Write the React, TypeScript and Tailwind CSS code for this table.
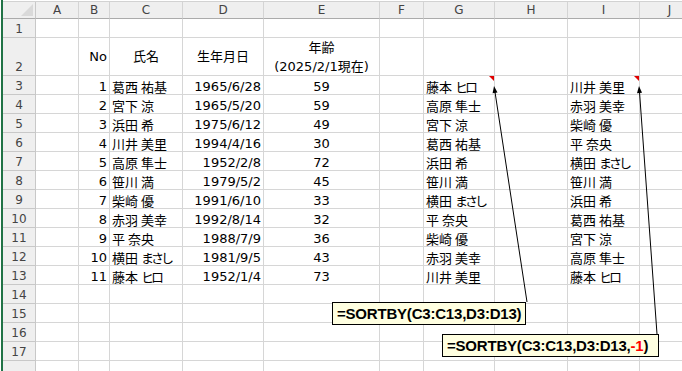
import React from 'react';

type Person = { no: number; name: string; birth: string; age: number };

const people: Person[] = [
  { no: 1, name: '葛西 祐基', birth: '1965/6/28', age: 59 },
  { no: 2, name: '宮下 涼', birth: '1965/5/20', age: 59 },
  { no: 3, name: '浜田 希', birth: '1975/6/12', age: 49 },
  { no: 4, name: '川井 美里', birth: '1994/4/16', age: 30 },
  { no: 5, name: '高原 隼士', birth: '1952/2/8', age: 72 },
  { no: 6, name: '笹川 満', birth: '1979/5/2', age: 45 },
  { no: 7, name: '柴崎 優', birth: '1991/6/10', age: 33 },
  { no: 8, name: '赤羽 美幸', birth: '1992/8/14', age: 32 },
  { no: 9, name: '平 奈央', birth: '1988/7/9', age: 36 },
  { no: 10, name: '横田 まさし', birth: '1981/9/5', age: 43 },
  { no: 11, name: '藤本 ヒロ', birth: '1952/1/4', age: 73 },
];

// SORTBY results
const byBirthAsc = ['藤本 ヒロ', '高原 隼士', '宮下 涼', '葛西 祐基', '浜田 希', '笹川 満', '横田 まさし', '平 奈央', '柴崎 優', '赤羽 美幸', '川井 美里'];
const byBirthDesc = [...byBirthAsc].reverse();

const font = { fontFamily: '"DejaVu Sans", "Noto Sans CJK JP", sans-serif' };
const jp: React.CSSProperties = { fontFamily: '"Noto Sans CJK JP", sans-serif' };

const colLetters = ['A', 'B', 'C', 'D', 'E', 'F', 'G', 'H', 'I', 'J'];
const colW = ['w-[43px]', 'w-[31px]', 'w-[73px]', 'w-[81px]', 'w-[116px]', 'w-[44px]', 'w-[71px]', 'w-[73px]', 'w-[72px]', 'w-[60px]'];

const grid = 'shrink-0 border-r border-b border-[#d6d6d6] overflow-hidden whitespace-nowrap';

const RowHead: React.FC<{ n?: number; tall?: boolean }> = ({ n, tall }) => (
  <div className={`shrink-0 w-[33px] bg-[#efefef] border-r border-b border-[#c8c8c8] text-center text-[12px] text-[#444] ${tall ? 'h-[38px] pt-[22px] leading-[15px]' : 'h-[19px] pt-[3px] leading-[15px]'}`}>
    {n}
  </div>
);

const Marker = () => (
  <div className="absolute top-0 right-0 w-0 h-0 border-t-[5px] border-l-[5px] border-t-[#e00000] border-l-transparent" />
);

// kana in the sheet font is proportional, so squeeze it a bit
const Name: React.FC<{ text: string }> = ({ text }) => (
  <span style={jp}>
    {text.split(/([ぁ-んァ-ン]+)/).map((part, i) =>
      /[ぁ-んァ-ン]/.test(part) ? (
        <span key={i} className="tracking-[-3px]">{part}</span>
      ) : (
        <React.Fragment key={i}>{part}</React.Fragment>
      )
    )}
  </span>
);

const DataRow: React.FC<{ n?: number; cells: (React.ReactNode | null)[]; mark?: boolean }> = ({ n, cells, mark }) => (
  <div className="flex h-[19px]">
    <RowHead n={n} />
    {colW.map((w, i) => {
      const align =
        i === 1 || i === 3 ? 'text-right pr-[2px]' : i === 4 ? 'text-center' : 'text-left pl-[2px]';
      return (
        <div key={i} className={`${grid} ${w} h-[19px] pt-[3px] leading-[15px] text-[13px] text-black relative ${align}`}>
          {cells[i]}
          {mark && (i === 6 || i === 8) && <Marker />}
        </div>
      );
    })}
  </div>
);

export default function App() {
  const empty = Array(10).fill(null);

  return (
    <div className="relative w-[682px] h-[371px] overflow-hidden bg-white flex" style={font}>
      <div className="w-[1px] shrink-0 bg-white" />
      <div className="w-[2px] shrink-0 bg-[#217346]" />

      <div className="flex flex-col">
        {/* strip above headers */}
        <div className="h-[10px] bg-white">
          <div className="mt-[1px] h-[1px] bg-[#d2d2d2]" />
        </div>

        {/* column headers */}
        <div className="flex h-[17px]">
          <div className="relative shrink-0 w-[33px] bg-[#efefef] border-r border-b border-r-[#c8c8c8] border-b-[#ababab]">
            <svg className="absolute right-[2px] bottom-[2px]" width="12" height="12" viewBox="0 0 12 12">
              <polygon points="12,0 12,12 0,12" fill="#d9d9d9" />
            </svg>
          </div>
          {colLetters.map((c, i) => (
            <div key={c} className={`shrink-0 ${colW[i]} bg-[#efefef] border-r border-b border-r-[#d4d4d4] border-b-[#ababab] text-center text-[12px] leading-[16px] text-[#444]`}>
              {c}
            </div>
          ))}
        </div>

        <DataRow n={1} cells={empty} />

        {/* header row */}
        <div className="flex h-[38px]">
          <RowHead n={2} tall />
          <div className={`${grid} ${colW[0]}`} />
          <div className={`${grid} ${colW[1]} flex items-center justify-end pr-[2px] text-[13px] leading-[15px]`}>No</div>
          <div className={`${grid} ${colW[2]} flex items-center justify-center text-[13px] leading-[15px]`}>氏名</div>
          <div className={`${grid} ${colW[3]} flex items-center justify-center text-[13px] leading-[15px]`}>生年月日</div>
          <div className={`${grid} ${colW[4]} text-center text-[13px] leading-[19px]`}>
            <div>年齢</div>
            <div>(2025/2/1現在)</div>
          </div>
          {colW.slice(5).map((w, i) => (
            <div key={i} className={`${grid} ${w}`} />
          ))}
        </div>

        {people.map((p, i) => (
          <DataRow
            key={p.no}
            n={i + 3}
            mark={i === 0}
            cells={[
              null,
              p.no,
              <Name text={p.name} />,
              p.birth,
              p.age,
              null,
              <Name text={byBirthAsc[i]} />,
              null,
              <Name text={byBirthDesc[i]} />,
              null,
            ]}
          />
        ))}

        {[14, 15, 16, 17].map((n) => (
          <DataRow key={n} n={n} cells={empty} />
        ))}
        <DataRow cells={empty} />
      </div>

      {/* comment callouts */}
      <svg className="absolute inset-0 pointer-events-none" width="682" height="371">
        <line x1="527" y1="302" x2="495" y2="92" stroke="#000" strokeWidth="1" />
        <polygon points="494,86 497.5,92.5 492.6,93.3" fill="#000" />
        <line x1="657" y1="334" x2="639.5" y2="92" stroke="#000" strokeWidth="1" />
        <polygon points="639,86 642,92.8 637,93.2" fill="#000" />
      </svg>

      <div
        className="absolute left-[332px] top-[302px] w-[194px] h-[23px] bg-[#ffffe1] border border-black pl-[4px] text-[15px] font-bold leading-[21px] tracking-[-0.2px] text-black whitespace-nowrap"
        style={{ fontFamily: '"Liberation Sans", Arial, sans-serif' }}
      >
        =SORTBY(C3:C13,D3:D13)
      </div>
      <div
        className="absolute left-[442px] top-[334px] w-[217px] h-[23px] bg-[#ffffe1] border border-black pl-[4px] text-[15px] font-bold leading-[21px] tracking-[-0.2px] text-black whitespace-nowrap"
        style={{ fontFamily: '"Liberation Sans", Arial, sans-serif' }}
      >
        =SORTBY(C3:C13,D3:D13,<span className="text-[#ff0000]">-1</span>)
      </div>
    </div>
  );
}
